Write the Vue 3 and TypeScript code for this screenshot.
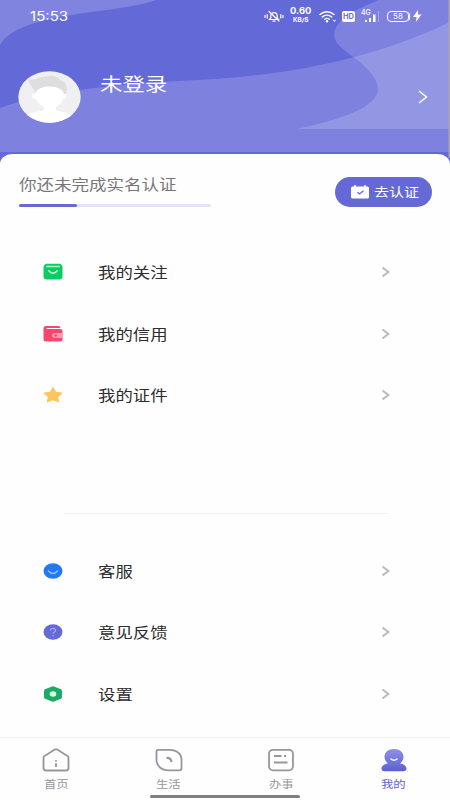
<script setup lang="ts">
interface MenuItem {
  icon: string
  label: string
}

const services: MenuItem[] = [
  { icon: 'follow', label: '我的关注' },
  { icon: 'credit', label: '我的信用' },
  { icon: 'cert', label: '我的证件' },
]
const support: MenuItem[] = [
  { icon: 'service', label: '客服' },
  { icon: 'feedback', label: '意见反馈' },
  { icon: 'settings', label: '设置' },
]
const groups: MenuItem[][] = [services, support]

const tabs: MenuItem[] = [
  { icon: 'home', label: '首页' },
  { icon: 'life', label: '生活' },
  { icon: 'work', label: '办事' },
  { icon: 'mine', label: '我的' },
]
const activeTab = 'mine'
const progress = 30
</script>

<template>
  <div class="screen">
    <header class="hero">
      <svg class="waves" width="450" height="166" viewBox="0 0 450 166">
        <path d="M0 0H156C134 8 99 10 72 15C36 21 10 28 0 45Z" fill="#fff" fill-opacity=".18" />
        <path d="M0 108C45 91 120 84 180 81C270 77 360 65 450 22V152H0Z" fill="#fff" fill-opacity=".17" />
        <path d="M379 0C346 13 331 25 335 39C339 52 375 65 378 88C379 108 338 120 297 129H450V0Z" fill="#fff" fill-opacity=".17" />
        <path d="M448.500 0H450V158H448.500Z" fill="#aaa5b5" />
      </svg>

      <div class="status">
        <span class="time">15:53</span>
        <div class="status-right">
          <svg class="bell" width="20" height="13" viewBox="0 0 20 13" fill="none" stroke="#fff" stroke-width="1.2" stroke-linecap="round">
            <path d="M5.500 9.500H14.500L13.200 8V6C13.200 3.800 11.900 2.600 10 2.600S6.800 3.800 6.800 6V8ZM9 11.200H11M5 1.500L15 11M1 5.400V7.400M3.200 4.500V8M19 5.400V7.400M16.800 4.500V8" />
          </svg>
          <div class="speed"><span class="rate">0.60</span><span class="unit">KB/S</span></div>
          <svg class="wifi" width="17" height="13" viewBox="0 0 17 13" fill="none" stroke="#fff" stroke-width="1.4" stroke-linecap="round">
            <path d="M1 4.500C5 .8 11 .8 15 4.500M3.200 7C6 4.700 10 4.700 12.800 7M5.600 9.200C7 8.200 9 8.200 10.400 9.200" />
            <circle cx="8" cy="11.300" r=".6" fill="#fff" />
            <path d="M14.200 10L15.500 11.500L16.500 10" stroke-width="1" />
          </svg>
          <span class="hd">HD</span>
          <div class="signal">
            <span class="gen">4G</span>
            <svg width="18" height="13" viewBox="0 0 18 13">
              <path d="M3 10H5V12H3ZM7 8H9V12H7ZM11 4.500H13.500V12H11Z" fill="#fff" />
              <path d="M16 1H17V12H16Z" fill="#fff" fill-opacity=".3" />
            </svg>
          </div>
          <div class="battery"><span>58</span></div>
          <svg class="bolt" width="9" height="12" viewBox="0 0 9 12"><path d="M5 0L0 7H3.600L2.800 12L8.500 4.600H5Z" fill="#fff" /></svg>
        </div>
      </div>

      <div class="profile">
        <svg class="avatar" width="63" height="52" viewBox="0 0 63 52">
          <defs><clipPath id="face"><ellipse cx="31.500" cy="26" rx="31.200" ry="25.800" /></clipPath></defs>
          <g clip-path="url(#face)">
            <path d="M0 0H63V52H0Z" fill="#f0f0f2" />
            <path d="M10 8C17 10 22 5 31 5C37 4 41 7 42 9C48 10 50 16 48 23H18C16 17 11 14 10 8Z" fill="#dedee0" />
            <path d="M17 23C19 13 44 13 46 23C50 22 49 28 45 28C43 33 40 35 38 36V39C43 42 53 39 57 52H5C8 39 21 42 26 39V36C22 34 20 32 18 28C13 28 12 22 17 23Z" fill="#fff" />
          </g>
        </svg>
        <span class="name wide">未登录</span>
        <svg class="go" width="10" height="14" viewBox="0 0 10 14" fill="none" stroke="#fff" stroke-width="1.5"><path d="M1 1L8.500 7L1 13" /></svg>
      </div>
    </header>

    <main class="card">
      <section class="verify">
        <div class="verify-info">
          <span class="verify-text wide">你还未完成实名认证</span>
          <div class="track"><div class="fill" :style="{ width: progress + '%' }"></div></div>
        </div>
        <button class="verify-btn">
          <svg width="18" height="14" viewBox="0 0 18 14">
            <path d="M1.500 1.500H3V.3H5V1.500H13V.3H15V1.500H16.500Q18 1.500 18 3V12Q18 13.500 16.500 13.500H1.500Q0 13.500 0 12V3Q0 1.500 1.500 1.500Z" fill="#fff" />
            <path d="M6.500 7.200L8.500 9L12.500 5.800" fill="none" stroke="#6569d7" stroke-width="1.300" />
          </svg>
          <span class="wide">去认证</span>
        </button>
      </section>

      <ul v-for="(group, index) in groups" :key="index" class="menu">
        <li v-for="item in group" :key="item.icon" class="row">
          <svg class="row-icon" width="20" height="18" viewBox="0 0 20 18">
            <template v-if="item.icon === 'follow'">
              <path d="M3.500 .8H16.500Q18 .8 18.800 2.300L19.500 4V13.500Q19.500 16.500 16.500 16.500H3.500Q.5 16.500 .5 13.500V4L1.200 2.300Q2 .8 3.500 .8Z" fill="#08ce62" />
              <path d="M3.500 3.600H16.500" stroke="#b4f5d0" stroke-width="1.500" stroke-linecap="round" />
              <path d="M5.800 7.800Q10 12.800 14.200 7.800" fill="none" stroke="#c8f9dc" stroke-width="1.700" stroke-linecap="round" />
            </template>
            <template v-else-if="item.icon === 'credit'">
              <path d="M3 1H15Q17.500 1 17.500 3H3.500V4H17Q19.500 4 19.500 6V14.500Q19.500 16.500 17 16.500H3Q.5 16.500 .5 14.500V3Q.5 1 3 1Z" fill="#f6486e" />
              <path d="M19.500 8H12Q9 8 9 10.500T12 13H19.500Z" fill="#fa9caf" />
              <circle cx="12.700" cy="10.500" r="1.200" fill="#f6486e" />
            </template>
            <path v-else-if="item.icon === 'cert'" d="M10 1.500L12.500 6.300L18.600 7.200L14.500 10.800L15.600 15.800L10 13.600L4.400 15.800L5.500 10.800L1.400 7.200L7.500 6.300Z" fill="#fdc55c" stroke="#fdc55c" stroke-width="1.200" stroke-linejoin="round" />
            <template v-else-if="item.icon === 'service'">
              <ellipse cx="10" cy="9" rx="9.500" ry="7.700" fill="#2379f5" />
              <path d="M5.500 9Q10 14 14.500 9" fill="none" stroke="#8ec3ff" stroke-width="1.600" stroke-linecap="round" />
            </template>
            <template v-else-if="item.icon === 'feedback'">
              <ellipse cx="10" cy="9" rx="9.500" ry="7.700" fill="#666ad7" />
              <path d="M7.600 7.500C7.600 4.700 12.600 4.700 12.600 7.500C12.600 9.200 10.100 8.900 10.100 10.800M10.100 12V13.200" fill="none" stroke="#a9a6f5" stroke-width="1.300" />
            </template>
            <template v-else>
              <path d="M9 1.600Q10 1.100 11 1.600L18 4.300Q19 4.800 19 6V12Q19 13.200 18 13.700L11 16.400Q10 16.900 9 16.400L2 13.700Q1 13.200 1 12V6Q1 4.800 2 4.300Z" fill="#1cab66" />
              <ellipse cx="10" cy="9" rx="3.300" ry="2.800" fill="#d5fbe7" />
            </template>
          </svg>
          <span class="row-label wide">{{ item.label }}</span>
          <svg class="chevron" width="9" height="12" viewBox="0 0 9 12" fill="none" stroke="#bcbcc0" stroke-width="2.200"><path d="M1.500 1.500L7.300 6L1.500 10.500" /></svg>
        </li>
      </ul>
    </main>

    <nav class="tabs">
      <div v-for="tab in tabs" :key="tab.icon" class="tab" :class="{ active: tab.icon === activeTab }">
        <svg width="28" height="24" viewBox="0 0 28 24" fill="none" stroke="#96979c" stroke-width="1.800" stroke-linejoin="round">
          <template v-if="tab.icon === 'home'">
            <path d="M1.500 9.500Q1.500 8.700 2.200 8.200L12.800 1.600Q14 1 15.200 1.600L25.800 8.200Q26.500 8.700 26.500 9.500V20Q26.500 22.500 24 22.500H4Q1.500 22.500 1.500 20Z" />
            <path d="M14 12V13.600M14 15.200V19" />
          </template>
          <template v-else-if="tab.icon === 'life'">
            <path d="M3.500 1.800H15C22 1.800 26.500 6 26.500 11.500V20.500Q26.500 22.300 24.500 22.300H14C6 22.300 1.500 17.500 1.500 12V3.500Q1.500 1.800 3.500 1.800Z" />
            <path d="M11.500 10Q15.700 9.500 16.500 14" stroke-width="2.200" />
          </template>
          <template v-else-if="tab.icon === 'work'">
            <rect x="2" y="1.800" width="24" height="20.500" rx="4" />
            <path d="M7 8H14.500M17 8H19M7 14.500H20.500" />
          </template>
          <template v-else>
            <defs><linearGradient id="user" x1="0" y1="0" x2="0" y2="1"><stop offset="0" stop-color="#8d90ec" /><stop offset="1" stop-color="#5c60cc" /></linearGradient></defs>
            <path d="M14 1C8 1 4.500 4.500 4.500 9C4.500 12 6 14 8 15.300C3.500 16.200 1.500 18.500 1.500 20.500Q1.500 23.300 4.500 23.300H23.500Q26.500 23.300 26.500 20.500C26.500 18.500 24.500 16.200 20 15.300C22 14 23.500 12 23.500 9C23.500 4.500 20 1 14 1Z" fill="url(#user)" stroke="none" />
            <path d="M11 11Q14 13.500 17 11" stroke="#fff" stroke-width="1.500" stroke-linecap="round" />
          </template>
        </svg>
        <span class="tab-label">{{ tab.label }}</span>
      </div>
      <div class="home-bar"></div>
    </nav>
  </div>
</template>

<style>
body {
  margin: 0;
  overflow: hidden;
}
</style>

<style scoped>
.screen {
  display: flex;
  flex-direction: column;
  width: 450px;
  height: 800px;
  overflow: hidden;
  background: #fefefe;
  font-family: "Noto Sans CJK SC", sans-serif;
}
.wide {
  transform: scaleX(1.2);
  transform-origin: left center;
  white-space: nowrap;
}
.hero {
  position: relative;
  flex: none;
  height: 153.500px;
}
.waves {
  position: absolute;
  left: 0;
  top: 0;
  background: #6469d8;
}
.status,
.profile {
  position: relative;
  display: flex;
  align-items: center;
  color: #fff;
}
.status {
  height: 32px;
  justify-content: space-between;
  padding: 0 28px 0 30px;
}
.time {
  font: 400 13px/32px Inter, sans-serif;
  transform: scaleX(1.16);
  transform-origin: left center;
}
.status-right {
  display: flex;
  align-items: center;
}
.speed {
  display: flex;
  flex-direction: column;
  align-items: center;
  width: 22px;
  margin-left: 6px;
  font: bold 8.500px/11px Inter, sans-serif;
}
.rate {
  margin-top: -2px;
  transform: scaleX(1.1);
}
.unit {
  font-size: 5.500px;
  line-height: 7px;
  transform: scaleX(1.15);
}
.wifi {
  margin-left: 7px;
}
.hd {
  width: 13px;
  margin-left: 6px;
  border-radius: 2px;
  background: #fff;
  color: #6f73d9;
  font: bold 7.500px/11px Inter, sans-serif;
  text-align: center;
}
.signal {
  position: relative;
  display: flex;
  margin-left: 7px;
}
.gen {
  position: absolute;
  left: -1px;
  top: -1px;
  font: 500 7px/7px Inter, sans-serif;
}
.battery {
  width: 20px;
  margin-left: 7px;
  border: 1px solid #fff;
  border-radius: 4px;
  font: 8px/9px Inter, sans-serif;
  text-align: center;
  box-shadow: 2px 0 0 -1px #fff;
}
.bolt {
  margin-left: 4px;
}
.profile {
  height: 52px;
  padding: 39px 22px 0 18px;
}
.avatar {
  margin-top: -1px;
}
.name {
  margin: -28px 0 0 19px;
  font-size: 18.700px;
  line-height: 24px;
}
.go {
  margin-left: auto;
}
.card {
  position: relative;
  flex: 1;
  border-radius: 12px 12px 0 0 / 10px 10px 0 0;
  background: #fefefe;
}
.verify {
  display: flex;
  justify-content: space-between;
  align-items: flex-start;
  height: 88px;
  padding: 0 18.500px 0 19px;
  box-sizing: border-box;
}
.verify-info {
  display: flex;
  flex-direction: column;
  width: 192px;
  padding-top: 19.500px;
}
.verify-text {
  color: #77777a;
  font-size: 14.600px;
  line-height: 22px;
}
.track {
  height: 3px;
  margin-top: 9px;
  border-radius: 2px;
  background: #e3e2fa;
}
.fill {
  height: 3px;
  border-radius: 2px;
  background: #676bcf;
}
.verify-btn {
  display: flex;
  align-items: center;
  gap: 5px;
  width: 96.500px;
  height: 30px;
  margin-top: 23.500px;
  padding: 0 0 0 16px;
  border: 0;
  border-radius: 15px;
  background: #6569d7;
  color: #fff;
  font: 12.500px/20px "Noto Sans CJK SC", sans-serif;
}
.menu {
  margin: 0;
  padding: 0 60px 0 43px;
  list-style: none;
}
.menu + .menu {
  margin: 87px 62px 0 64px;
  padding: 26px 0 0;
  border-top: 1px solid #f0f0f1;
}
.menu + .menu .row {
  margin: 0 -2px 0 -21px;
}
.row {
  display: flex;
  align-items: center;
  height: 61.500px;
}
.row-label {
  margin-left: 34.500px;
  color: #2d2d2f;
  font-size: 14.500px;
  line-height: 22px;
}
.chevron {
  margin-left: auto;
}
.tabs {
  position: relative;
  display: flex;
  flex: none;
  height: 63px;
  box-sizing: border-box;
  border-top: 1px solid #f2f2f3;
  background: #fefefe;
}
.tab {
  display: flex;
  flex: 1;
  flex-direction: column;
  align-items: center;
  padding-top: 10px;
  color: #98989c;
}
.tab-label {
  margin-top: 4px;
  font-size: 10.300px;
  line-height: 16px;
  transform: scaleX(1.2);
}
.active {
  color: #6064ca;
}
.home-bar {
  position: absolute;
  left: 150px;
  bottom: 2px;
  width: 150px;
  height: 3px;
  border-radius: 2px;
  background: #7f7f80;
}
</style>
